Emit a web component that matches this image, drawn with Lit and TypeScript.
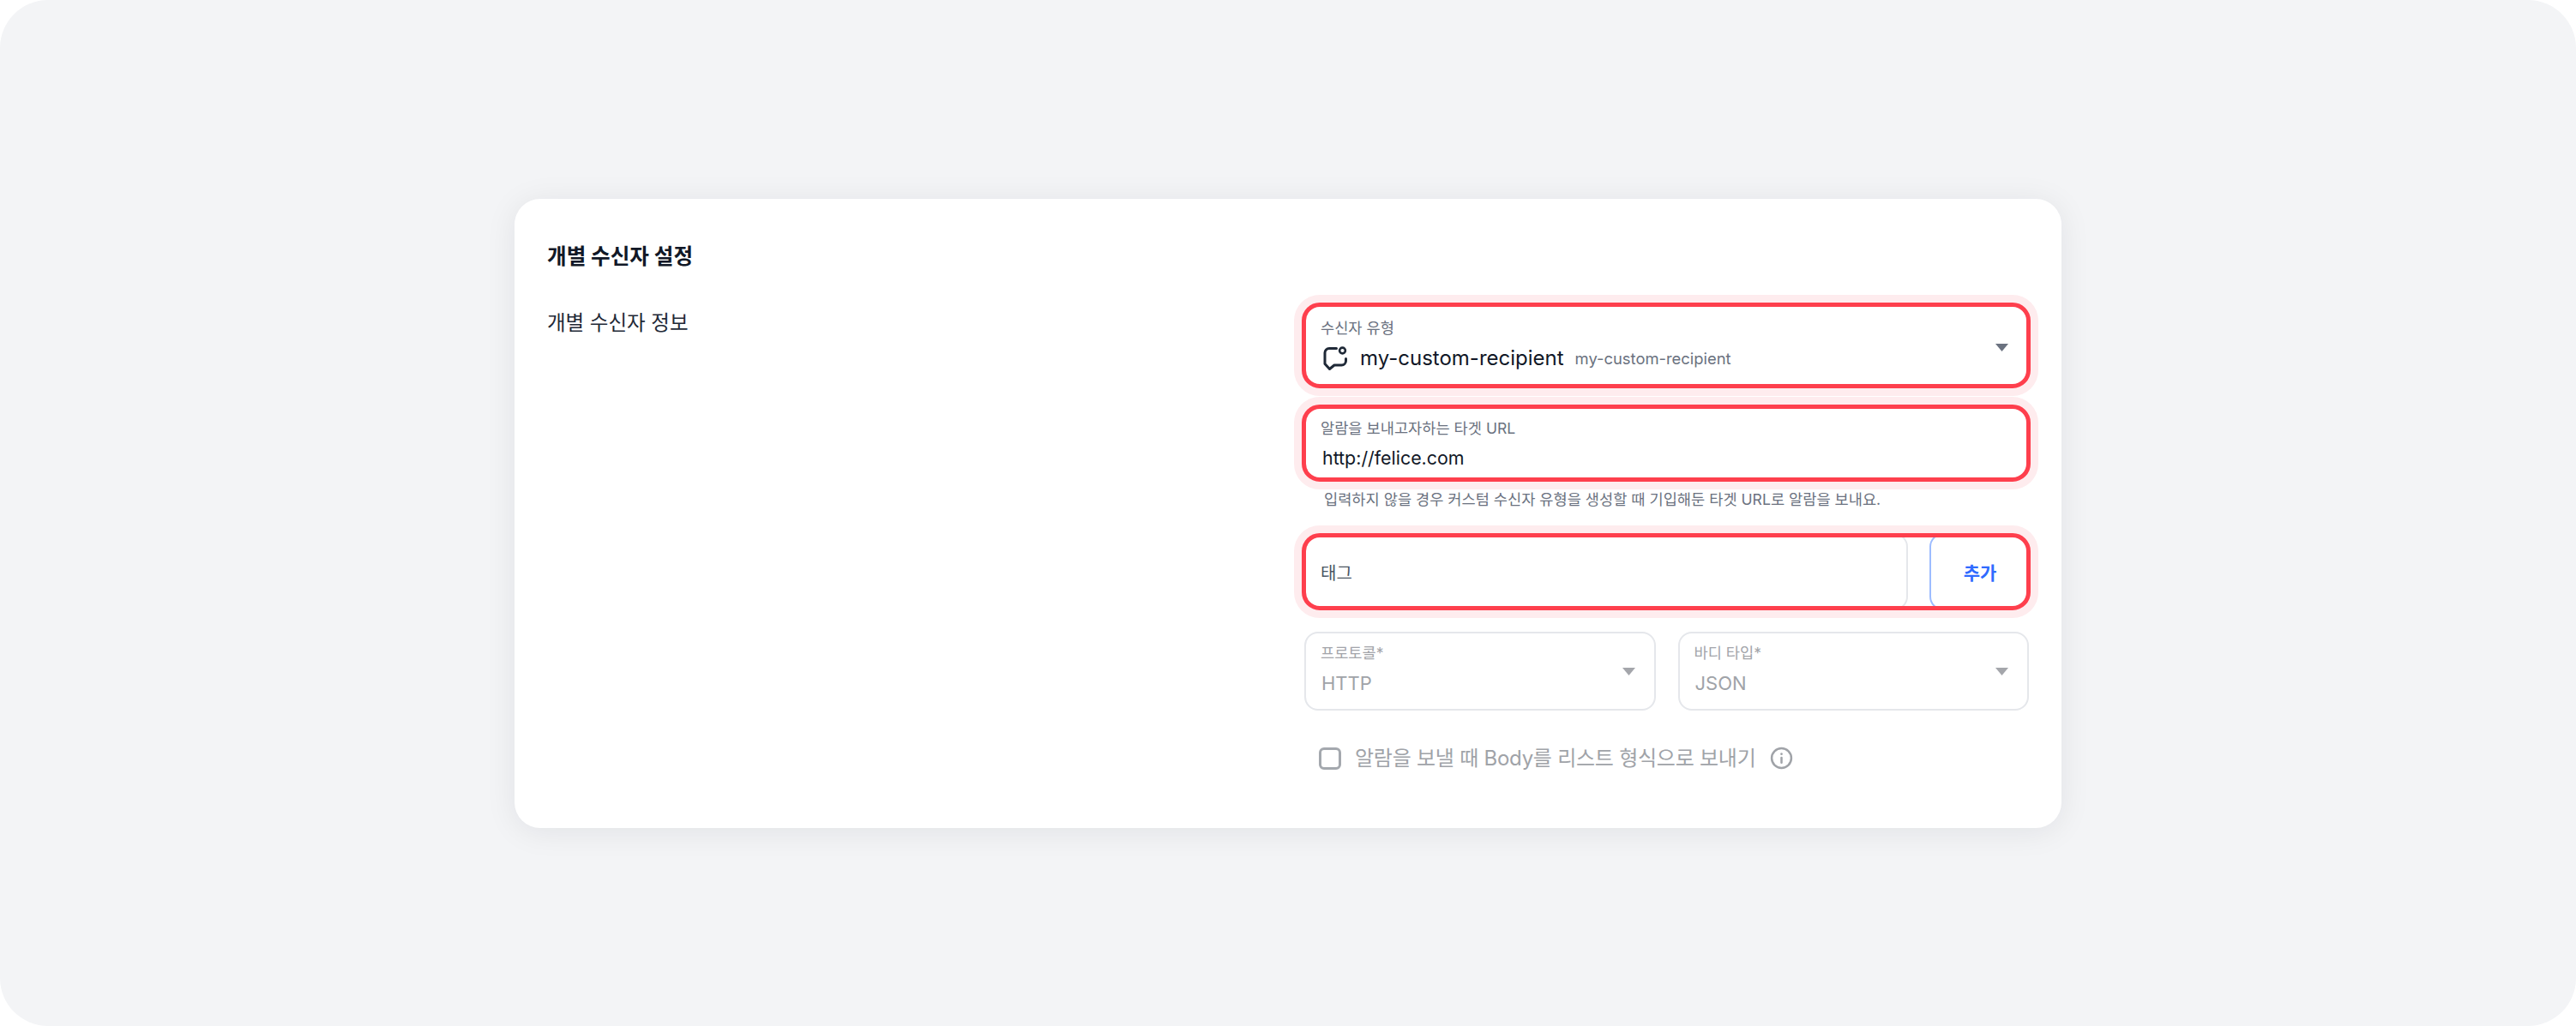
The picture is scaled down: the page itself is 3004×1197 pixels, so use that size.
import { LitElement, html, css } from "lit";
import { customElement } from "lit/decorators.js";

const caret = html`<svg class="caret" viewBox="0 0 15 9"><path d="M0 0H15L7.5 9Z" fill="currentColor"/></svg>`;

@customElement("app-root")
export class AppRoot extends LitElement {
  static styles = css`
    :host { display: block; background: #fff; font-family: Inter, "Noto Sans CJK KR", sans-serif; color: #111827; }
    * { box-sizing: border-box; }
    .page { height: 1197px; background: #f3f4f6; border-radius: 56px; display: flex; align-items: center; justify-content: center; }
    .card { width: 1804px; height: 734px; background: #fff; border-radius: 30px; padding: 51px 36px 0 38px; box-shadow: 0 4px 36px rgba(17, 24, 39, 0.08); }
    .title { font-size: 24.6px; font-weight: 700; line-height: 32px; margin: 0; color: #111827; }
    .grid { display: grid; grid-template-columns: 880px 1fr; margin-top: 38px; }
    .label { font-size: 23.5px; line-height: 32px; color: #1f2937; margin-top: 8px; }
    .col { display: flex; flex-direction: column; }
    .hl { border: 5px solid #fe3f4d; border-radius: 21px; box-shadow: 0 0 0 9px #feecee; background: #fff; position: relative; }
    .field { height: 100px; padding: 11px 17px 0; display: flex; flex-direction: column; }
    .url { height: 90px; margin-top: 19px; padding-top: 9px; }
    .sm { font-size: 17.6px; line-height: 28px; color: #6b7280; }
    .val { display: flex; align-items: center; gap: 14px; height: 36px; margin-top: 3px; font-size: 24px; }
    .val.u { font-size: 21.4px; height: 32px; margin-top: 4px; padding-left: 2px; color: #111827; }
    .val svg { width: 30px; height: 30px; flex: none; margin-left: 2px; }
    .val .name { color: #111827; }
    .val .sub { font-size: 18.4px; color: #6b7280; margin-left: -1px; }
    .caret { position: absolute; width: 15px; height: 9px; right: 21px; top: 43px; color: #6b7280; }
    .help { font-size: 17.6px; line-height: 28px; color: #6b7280; margin: 7px 0 0 26px; }
    .tag { display: flex; gap: 25px; height: 90px; margin-top: 25px; overflow: hidden; }
    .tag .in { flex: 1; margin: -5px 0 -5px -5px; border: 2px solid #e5e7eb; border-radius: 16px; display: flex; align-items: center; padding: 2px 0 0 20px; font-size: 20px; color: #4b5563; }
    .tag .btn { width: 118px; margin: -5px -5px -5px 0; border: 2px solid #9dbcff; border-radius: 16px; display: flex; align-items: center; justify-content: center; font-size: 21px; font-weight: 600; color: #2f6bff; }
    .two { display: grid; grid-template-columns: 1fr 1fr; gap: 26px; margin: 25px 2px 0 3px; }
    .dis { position: relative; height: 92px; border: 2px solid #e5e7eb; border-radius: 16px; padding: 9px 17px 0; display: flex; flex-direction: column; }
    .dis .sm { color: #a3a5aa; }
    .dis .v { font-size: 22px; line-height: 32px; margin-top: 5px; color: #a0a3a8; padding-left: 1px; }
    .dis .caret { color: #a4a6ab; right: 22px; top: 40px; }
    .check { display: flex; align-items: center; margin: 42px 0 0 20px; color: #a0a3a8; font-size: 24px; line-height: 28px; letter-spacing: -0.25px; }
    .box { width: 26px; height: 26px; border: 3px solid #a4a8ae; border-radius: 6px; margin-right: 16px; }
    .info { width: 27px; height: 27px; margin-left: 16px; }
  `;

  render() {
    return html`<div class="page"><div class="card">
      <h2 class="title">개별 수신자 설정</h2>
      <div class="grid">
        <div class="label">개별 수신자 정보</div>
        <div class="col">
          <div class="hl field">
            <div class="sm">수신자 유형</div>
            <div class="val">
              <svg viewBox="0 0 30 30" fill="none" stroke="#1f2937" stroke-width="3" stroke-linecap="round" stroke-linejoin="round">
                <path d="M16.5 3.5H8A5 5 0 0 0 3 8.5V21.5L8.5 27.5L14 23H22.5A5 5 0 0 0 27.5 18V15.5"/>
                <circle cx="23.5" cy="6" r="3.4" stroke-width="2.6"/>
              </svg>
              <span class="name">my-custom-recipient</span>
              <span class="sub">my-custom-recipient</span>
            </div>
            ${caret}
          </div>
          <div class="hl field url">
            <div class="sm">알람을 보내고자하는 타겟 URL</div>
            <div class="val u">http://felice.com</div>
          </div>
          <div class="help">입력하지 않을 경우 커스텀 수신자 유형을 생성할 때 기입해둔 타겟 URL로 알람을 보내요.</div>
          <div class="hl tag">
            <div class="in">태그</div>
            <div class="btn">추가</div>
          </div>
          <div class="two">
            <div class="dis"><div class="sm">프로토콜*</div><div class="v">HTTP</div>${caret}</div>
            <div class="dis"><div class="sm">바디 타입*</div><div class="v">JSON</div>${caret}</div>
          </div>
          <div class="check">
            <div class="box"></div>
            <span>알람을 보낼 때 Body를 리스트 형식으로 보내기</span>
            <svg class="info" viewBox="0 0 26 26" fill="none" stroke="#a0a3a8" stroke-width="2.4">
              <circle cx="13" cy="13" r="11"/>
              <path d="M13 12.5V18" stroke-linecap="round"/>
              <circle cx="13" cy="8.4" r="0.6" fill="#a0a3a8" stroke-width="1.4"/>
            </svg>
          </div>
        </div>
      </div>
    </div></div>`;
  }
}
